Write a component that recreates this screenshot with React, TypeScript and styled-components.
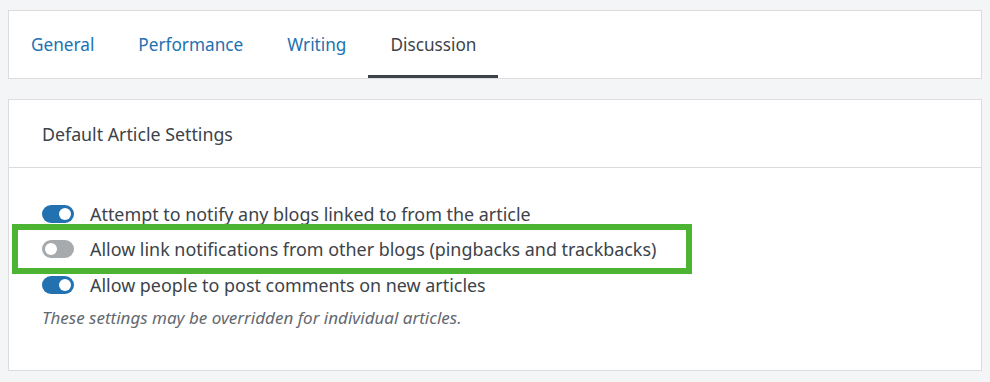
import React from "react";
import styled, { createGlobalStyle } from "styled-components";

const Global = createGlobalStyle`
  html, body { margin: 0; padding: 0; background: #f3f5f6; }
  body { font-family: "Noto Sans", "Open Sans", sans-serif; color: #3c434a; }
  * { box-sizing: border-box; }
`;

const Page = styled.div`
  padding: 10px 8px 0 8px;
`;

const Card = styled.div`
  background: #fff;
  border: 1px solid #dcdcde;
`;

const TabCard = styled(Card)`
  height: 69px;
`;

const TabList = styled.div`
  display: flex;
  height: 100%;
`;

const Tab = styled.div<{ $active?: boolean }>`
  padding: 3px 22px 0 22px;
  display: flex;
  align-items: center;
  font-size: 17.2px;
  color: ${(p) => (p.$active ? "#3c434a" : "#2271b1")};
  border-bottom: 3px solid ${(p) => (p.$active ? "#3c434a" : "transparent")};
`;

const SettingsCard = styled(Card)`
  margin-top: 20px;
  height: 272px;
`;

const CardHeader = styled.div`
  height: 68px;
  padding: 0 33px;
  display: flex;
  align-items: center;
  font-size: 17.8px;
  color: #3c434a;
  border-bottom: 1px solid #dcdcde;
`;

const CardBody = styled.div`
  padding: 28px 33px 0 33px;
`;

const Row = styled.div`
  position: relative;
  display: flex;
  align-items: center;
  gap: 16px;
  height: 35.5px;
  font-size: 17.9px;
  color: #3c434a;
`;

const Highlight = styled.div`
  position: absolute;
  left: -30px;
  top: -8px;
  width: 680px;
  height: 50px;
  border: 6px solid #4db332;
  pointer-events: none;
`;

const Toggle = styled.span<{ $on?: boolean }>`
  position: relative;
  flex: none;
  width: 32px;
  height: 18px;
  border-radius: 9px;
  background: ${(p) => (p.$on ? "#2271b1" : "#a7aaad")};
  &::after {
    content: "";
    position: absolute;
    top: 3px;
    left: ${(p) => (p.$on ? "17px" : "3px")};
    width: 12px;
    height: 12px;
    border-radius: 50%;
    background: #fff;
  }
`;

const Note = styled.p`
  margin: 4px 0 0 0;
  font-size: 17px;
  font-style: italic;
  color: #646970;
  line-height: 22px;
`;

export default function App() {
  return (
    <>
      <Global />
      <Page>
        <TabCard>
          <TabList>
            <Tab>General</Tab>
            <Tab>Performance</Tab>
            <Tab>Writing</Tab>
            <Tab $active>Discussion</Tab>
          </TabList>
        </TabCard>
        <SettingsCard>
          <CardHeader>Default Article Settings</CardHeader>
          <CardBody>
            <Row>
              <Toggle $on />
              Attempt to notify any blogs linked to from the article
            </Row>
            <Row>
              <Highlight />
              <Toggle />
              Allow link notifications from other blogs (pingbacks and trackbacks)
            </Row>
            <Row>
              <Toggle $on />
              Allow people to post comments on new articles
            </Row>
            <Note>These settings may be overridden for individual articles.</Note>
          </CardBody>
        </SettingsCard>
      </Page>
    </>
  );
}
